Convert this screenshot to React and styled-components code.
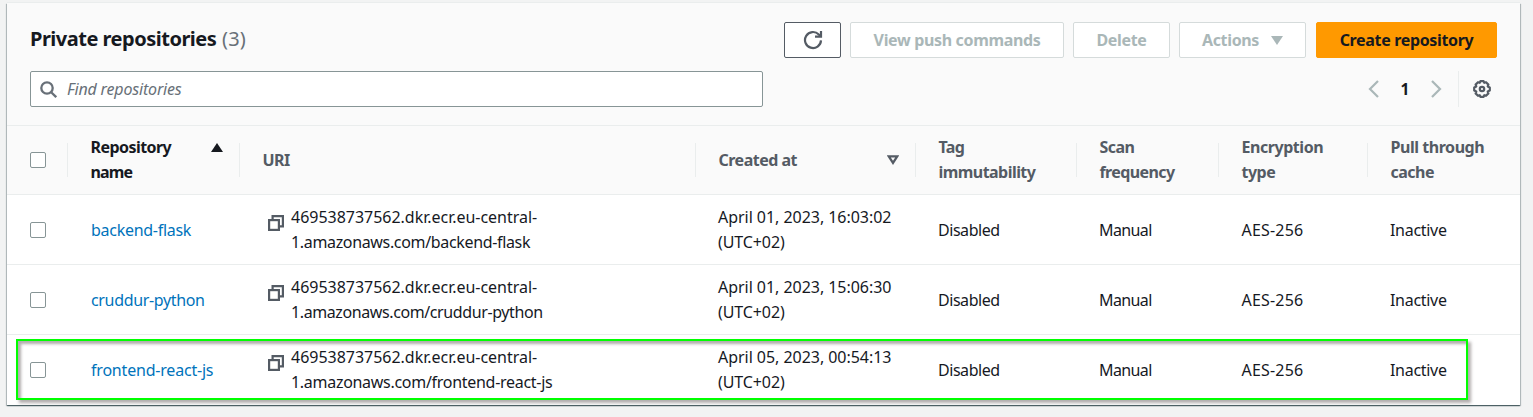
import React from "react";
import styled, { createGlobalStyle } from "styled-components";

const GlobalStyle = createGlobalStyle`
  body {
    margin: 0;
    background: #f2f3f3;
    color: #16191f;
    font: 16px/25px "Noto Sans", "Open Sans", sans-serif;
  }
  *, *::before, *::after { box-sizing: border-box; }
`;

const Page = styled.main`
  height: 417px;
  padding: 3px 13px 12px 7px;
  overflow: hidden;
`;

const Panel = styled.section`
  position: relative;
  height: 402px;
  background: #fff;
  box-shadow: 0 1px 1px 0 rgba(0, 28, 36, 0.5), 1px 1px 1px 0 rgba(0, 28, 36, 0.2),
    -1px 1px 1px 0 rgba(0, 28, 36, 0.2), 0 -1px 0 0 #eaeded;
`;

const PanelHeader = styled.header`
  height: 123px;
  padding: 19px 23px 0;
  background: #fafafa;
  border-bottom: 1px solid #eaeded;
`;

const Bar = styled.div`
  display: flex;
  align-items: center;
  justify-content: space-between;
  height: 36px;
  & + & { margin-top: 13px; }
`;

const Title = styled.h2`
  margin: 0 0 2px;
  font-size: 20px;
  line-height: 30px;
  font-weight: 700;
  letter-spacing: -0.5px;
`;

const Count = styled.span`
  margin-left: 1px;
  font-weight: 400;
  color: #687078;
  letter-spacing: 0.2px;
`;

const Actions = styled.div`
  display: flex;
  gap: 9px;
`;

const Button = styled.button`
  display: flex;
  align-items: center;
  justify-content: center;
  gap: 12px;
  width: ${(p) => p.$width}px;
  height: 36px;
  padding: 0;
  border: 1px solid #d5dbdb;
  border-radius: 2px;
  background: #fff;
  color: #aab7b8;
  font: 700 16px/25px "Noto Sans", sans-serif;
  letter-spacing: -0.34px;
  white-space: nowrap;
`;

const IconButton = styled(Button)`
  padding-bottom: 1px;
  border-color: #545b64;
  color: #545b64;
`;

const PrimaryButton = styled(Button)`
  margin-left: 1px;
  border-color: #ff9900;
  background: #ff9900;
  color: #16191f;
`;

const Search = styled.label`
  display: flex;
  align-items: center;
  gap: 10px;
  width: 733px;
  height: 36px;
  padding-left: 9px;
  border: 1px solid #879596;
  border-radius: 2px;
  background: #fff;
  color: #687078;
`;

const SearchInput = styled.input`
  flex: 1;
  padding: 0;
  border: 0;
  outline: 0;
  background: transparent;
  font: italic 16px/25px "Noto Sans", sans-serif;
  letter-spacing: -0.17px;
  &::placeholder { color: #687078; opacity: 1; }
`;

const Pager = styled.nav`
  display: flex;
  align-items: center;
  height: 36px;
  color: #aab7b8;
`;

const PageNumber = styled.span`
  width: 52px;
  text-align: center;
  font-weight: 700;
  font-size: 15.5px;
  color: #16191f;
`;

const Settings = styled.div`
  display: flex;
  align-items: center;
  height: 36px;
  margin-left: 16px;
  padding: 0 6px 0 14px;
  border-left: 1px solid #eaeded;
  color: #545b64;
`;

const Row = styled.div`
  display: grid;
  grid-template-columns: 61px 172px 456px 220px 161px 142px 149px 152px;
  align-items: center;
  height: 70px;
  border-bottom: 1px solid #eaeded;
  &:last-child { border-bottom-color: transparent; }
`;

const HeadRow = styled(Row)`
  height: 69px;
  background: #fafafa;
`;

const HeadCell = styled.div`
  display: flex;
  align-items: center;
  justify-content: space-between;
  height: 34px;
  padding: 0 16px 0 22.5px;
  border-right: 1px solid #eaeded;
  font-weight: 700;
  color: ${(p) => (p.$sorted ? "#16191f" : "#545b64")};
  &:last-child { border-right: 0; }
  svg { margin-top: ${(p) => (p.$sorted ? "-25px" : "0")}; }
`;

const Cell = styled.div`
  display: flex;
  align-items: center;
  padding-left: ${(p) => p.$inset || 22}px;
`;

const TextCell = styled(Cell)`
  padding-top: 2px;
`;

const CheckCell = styled(HeadCell)`
  justify-content: flex-start;
  padding-left: 23px;
`;

const Checkbox = styled.span`
  width: 16px;
  height: 16px;
  border: 1px solid #879596;
  border-radius: 2px;
  background: #fff;
`;

const Line = styled.span`
  display: block;
  white-space: nowrap;
  letter-spacing: ${(p) => p.$track || 0}px;
`;

const Link = styled.a`
  color: #0073bb;
  white-space: nowrap;
  letter-spacing: ${(p) => p.$track}px;
`;

const Uri = styled.div`
  display: flex;
  align-items: flex-start;
  gap: 7px;
  svg { margin-top: 10px; flex: none; }
`;

const Highlight = styled.div`
  position: absolute;
  left: 9px;
  top: 336px;
  width: 1452px;
  height: 61px;
  border: 2px solid #00ff00;
  box-shadow: 3px 3px 3px rgba(60, 50, 50, 0.4), inset 3px 3px 3px rgba(60, 50, 50, 0.4);
  pointer-events: none;
`;

const RefreshIcon = () => (
  <svg width="20" height="20" viewBox="0 0 20 20" fill="none" stroke="currentColor" strokeWidth="2.2">
    <path d="M18 10.4a8 8 0 1 1-2.2-5.9L17.4 6" />
    <path d="M18 1v5.6h-6" />
  </svg>
);

const SearchIcon = () => (
  <svg width="17" height="17" viewBox="0 0 17 17" fill="none" stroke="currentColor" strokeWidth="2.3">
    <circle cx="7" cy="7" r="5.7" />
    <path d="M11.2 11.2l5 5" />
  </svg>
);

const Chevron = ({ flip }) => (
  <svg width="11" height="18" viewBox="0 0 11 18" fill="none" stroke="currentColor" strokeWidth="2.2">
    <path d={flip ? "M1 1l8 8-8 8" : "M10 1L2 9l8 8"} />
  </svg>
);

const GearIcon = () => (
  <svg width="18" height="18" viewBox="0 0 18 18" fill="none" stroke="currentColor" strokeWidth="2.2" strokeLinejoin="round">
    <path d="M7.4 1.2h3.2l.7 1.6 1.7-.6 2.4 2.4-.7 1.8 2.1 1v3.2l-2.1 1 .7 1.8-2.4 2.4-1.7-.6-.7 1.6H7.4l-.7-1.6-1.7.6-2.4-2.4.7-1.8-2.1-1V7.400l2.1-1-.7-1.800L5 2.200l1.700.6z" />
    <circle cx="9" cy="9" r="2.2" />
  </svg>
);

const CopyIcon = () => (
  <svg width="16" height="16" viewBox="0 0 16 16" fill="none" stroke="#545b64" strokeWidth="2.2">
    <path d="M4.6 4.500V1.100h10.300v10.300h-3" />
    <rect x="1.100" y="5.100" width="9.800" height="9.800" fill="#fff" />
  </svg>
);

const SortUp = () => (
  <svg width="12" height="9" viewBox="0 0 12 9"><path d="M6 0l6 9H0z" fill="#16191f" /></svg>
);

const SortNone = () => (
  <svg width="12" height="10" viewBox="0 0 12 10"><path d="M1.700 1.300h8.600L6 7.800z" fill="none" stroke="#545b64" strokeWidth="2.300" /></svg>
);

const CaretDown = () => (
  <svg width="12" height="9" viewBox="0 0 12 9"><path d="M0 0h12L6 9z" fill="currentColor" /></svg>
);

const columns = [
  { lines: [["Repository", -0.55], ["name", -0.9]], sorted: true, icon: <SortUp /> },
  { lines: [["URI", -0.5]] },
  { lines: [["Created at", -0.5]], icon: <SortNone /> },
  { lines: [["Tag", -0.6], ["immutability", -0.55]] },
  { lines: [["Scan", -0.55], ["frequency", -0.6]] },
  { lines: [["Encryption", -0.45], ["type", -0.5]] },
  { lines: [["Pull through", -0.45], ["cache", -0.5]] },
];

const repositories = [
  { name: "backend-flask", time: "April 01, 2023, 16:03:02", track: -0.28, uriTrack: -0.34 },
  { name: "cruddur-python", time: "April 01, 2023, 15:06:30", track: -0.34, uriTrack: -0.4 },
  { name: "frontend-react-js", time: "April 05, 2023, 00:54:13", track: -0.2, uriTrack: -0.29 },
];

export default function App() {
  return (
    <Page>
      <GlobalStyle />
      <Panel>
        <PanelHeader>
          <Bar>
            <Title>Private repositories <Count>(3)</Count></Title>
            <Actions>
              <IconButton $width={57} aria-label="Refresh"><RefreshIcon /></IconButton>
              <Button $width={214}>View push commands</Button>
              <Button $width={97}>Delete</Button>
              <Button $width={127}>Actions <CaretDown /></Button>
              <PrimaryButton $width={181}>Create repository</PrimaryButton>
            </Actions>
          </Bar>
          <Bar>
            <Search>
              <SearchIcon />
              <SearchInput placeholder="Find repositories" />
            </Search>
            <Pager>
              <Chevron />
              <PageNumber>1</PageNumber>
              <Chevron flip />
              <Settings><GearIcon /></Settings>
            </Pager>
          </Bar>
        </PanelHeader>
        <HeadRow>
          <CheckCell><Checkbox /></CheckCell>
          {columns.map((col) => (
            <HeadCell key={col.lines[0][0]} $sorted={col.sorted}>
              <div>
                {col.lines.map(([text, track]) => <Line key={text} $track={track}>{text}</Line>)}
              </div>
              {col.icon}
            </HeadCell>
          ))}
        </HeadRow>
        <div>
          {repositories.map((repo) => (
            <Row key={repo.name}>
              <Cell $inset={23}><Checkbox /></Cell>
              <TextCell $inset={23}><Link $track={repo.track}>{repo.name}</Link></TextCell>
              <Cell $inset={28}>
                <Uri>
                  <CopyIcon />
                  <div>
                    <Line $track={-0.02}>469538737562.dkr.ecr.eu-central-</Line>
                    <Line $track={repo.uriTrack}>1.amazonaws.com/{repo.name}</Line>
                  </div>
                </Uri>
              </Cell>
              <Cell>
                <div>
                  <Line $track={-0.04}>{repo.time}</Line>
                  <Line $track={-0.1}>(UTC+02)</Line>
                </div>
              </Cell>
              <TextCell><Line $track={-0.45}>Disabled</Line></TextCell>
              <TextCell><Line $track={-0.6}>Manual</Line></TextCell>
              <TextCell $inset={22.5}><Line $track={0.2}>AES-256</Line></TextCell>
              <TextCell><Line $track={-0.3}>Inactive</Line></TextCell>
            </Row>
          ))}
        </div>
        <Highlight />
      </Panel>
    </Page>
  );
}
